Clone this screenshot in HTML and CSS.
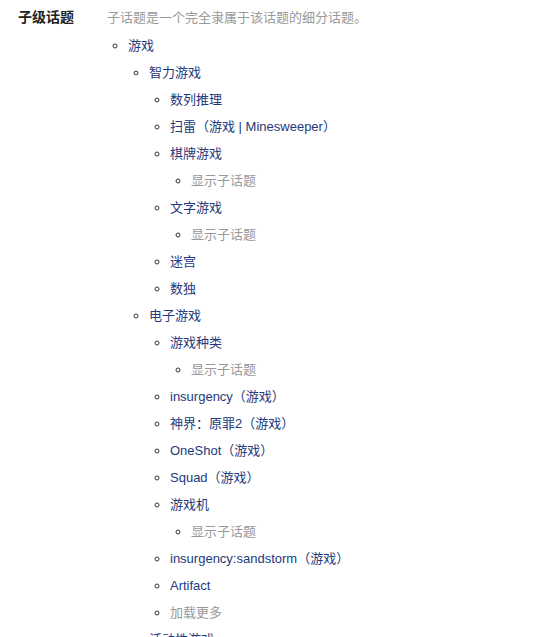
FILE: index.html
```html
<!DOCTYPE html>
<html lang="zh-CN">
<head>
    <meta charset="UTF-8">
    <meta name="viewport" content="width=device-width, initial-scale=1.0">
    <title>子级话题</title>
    <link rel="stylesheet" href="styles.css">
</head>
<body>
    <div class="field">
        <div class="field-label">子级话题</div>
        <div class="field-body">
            <div class="field-desc">子话题是一个完全隶属于该话题的细分话题。</div>
            <ul class="tree">
                <li><a href="#">游戏</a>
                    <ul>
                        <li><a href="#">智力游戏</a>
                            <ul>
                                <li><a href="#">数列推理</a></li>
                                <li><a href="#">扫雷（游戏 | Minesweeper）</a></li>
                                <li><a href="#">棋牌游戏</a>
                                    <ul><li class="more">显示子话题</li></ul>
                                </li>
                                <li><a href="#">文字游戏</a>
                                    <ul><li class="more">显示子话题</li></ul>
                                </li>
                                <li><a href="#">迷宫</a></li>
                                <li><a href="#">数独</a></li>
                            </ul>
                        </li>
                        <li><a href="#">电子游戏</a>
                            <ul>
                                <li><a href="#">游戏种类</a>
                                    <ul><li class="more">显示子话题</li></ul>
                                </li>
                                <li><a href="#">insurgency（游戏）</a></li>
                                <li><a href="#">神界：原罪2（游戏）</a></li>
                                <li><a href="#">OneShot（游戏）</a></li>
                                <li><a href="#">Squad（游戏）</a></li>
                                <li><a href="#">游戏机</a>
                                    <ul><li class="more">显示子话题</li></ul>
                                </li>
                                <li><a href="#">insurgency:sandstorm（游戏）</a></li>
                                <li><a href="#">Artifact</a></li>
                                <li class="more">加载更多</li>
                            </ul>
                        </li>
                        <li><a href="#">活动性游戏</a></li>
                    </ul>
                </li>
            </ul>
        </div>
    </div>
</body>
</html>
```

FILE: styles.css
```css
body {
    margin: 0;
    padding: 0;
    background-color: #fff;
    color: #333;
    font-family: "Liberation Sans", "Noto Sans CJK SC", sans-serif;
    font-size: 13px;
}
a {
    color: #24397c;
    text-decoration: none;
}
.field {
    display: flex;
    padding: 4px 0 0 18px;
}
.field-label {
    width: 89px;
    flex-shrink: 0;
    line-height: 27px;
    font-size: 14px;
    font-weight: bold;
    color: #222;
}
.field-body {
    flex: 1;
}
.field-desc {
    line-height: 27px;
    color: #999;
}
.tree,
.tree ul {
    list-style: circle;
    margin: 0;
    padding-left: 21px;
}
.tree {
    margin-top: 1px;
}
.tree li {
    line-height: 27px;
}
.tree li::marker {
    color: #333;
}
.tree .more {
    color: #999;
}
```
